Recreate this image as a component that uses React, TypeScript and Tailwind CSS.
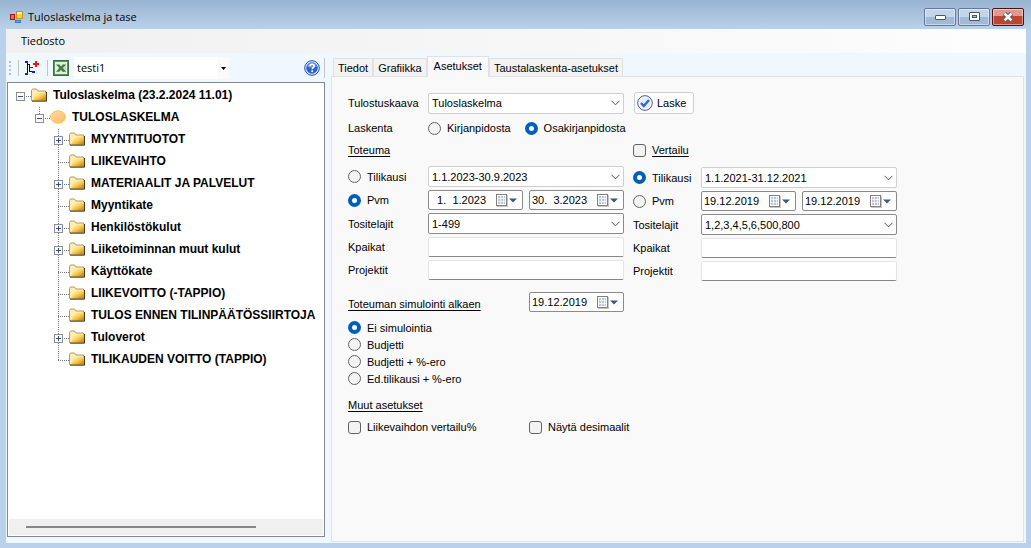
import React, { useState } from 'react';
import clsx from 'clsx';

type NodeIcon = 'folder' | 'group';

interface TreeNode {
  label: string;
  icon: NodeIcon;
  state?: 'open' | 'closed';
  children?: TreeNode[];
}

const tree: TreeNode = {
  label: 'Tuloslaskelma (23.2.2024 11.01)',
  icon: 'folder',
  state: 'open',
  children: [
    {
      label: 'TULOSLASKELMA',
      icon: 'group',
      state: 'open',
      children: [
        { label: 'MYYNTITUOTOT', icon: 'folder', state: 'closed' },
        { label: 'LIIKEVAIHTO', icon: 'folder' },
        { label: 'MATERIAALIT JA PALVELUT', icon: 'folder', state: 'closed' },
        { label: 'Myyntikate', icon: 'folder' },
        { label: 'Henkilöstökulut', icon: 'folder', state: 'closed' },
        { label: 'Liiketoiminnan muut kulut', icon: 'folder', state: 'closed' },
        { label: 'Käyttökate', icon: 'folder' },
        { label: 'LIIKEVOITTO (-TAPPIO)', icon: 'folder' },
        { label: 'TULOS ENNEN TILINPÄÄTÖSSIIRTOJA', icon: 'folder' },
        { label: 'Tuloverot', icon: 'folder', state: 'closed' },
        { label: 'TILIKAUDEN VOITTO (TAPPIO)', icon: 'folder' },
      ],
    },
  ],
};

const tabs = ['Tiedot', 'Grafiikka', 'Asetukset', 'Taustalaskenta-asetukset'];
const simulations = ['Ei simulointia', 'Budjetti', 'Budjetti + %-ero', 'Ed.tilikausi + %-ero'];

const AppIcon = () => (
  <svg width="14" height="14" viewBox="0 0 14 14" shapeRendering="crispEdges" aria-hidden="true">
    <rect x="0.500" y="4.500" width="4" height="5" fill="#e8685c" stroke="#a01810" />
    <rect x="6.500" y="1.500" width="6" height="7" fill="#ffcf3a" stroke="#c8921a" />
    <path d="M7 2h5v2H7z" fill="#fff0a8" />
    <rect x="5.500" y="10.500" width="5" height="2" fill="#6aa4f2" stroke="#3a74d8" />
  </svg>
);

const HierarchyIcon = () => (
  <svg width="16" height="16" viewBox="0 0 16 16" shapeRendering="crispEdges" aria-hidden="true">
    <path d="M3.500 2v12M3 4.500h3M5.500 4v8M5 7.500h3M5 11.500h5" stroke="#111" fill="none" />
    <path d="M1 1h3v2H1zM1 13h3v2H1zM6 7h3v1H6zM8 11h3v2H8z" fill="#1414ff" />
    <path d="M11 1h2v2h2v2h-2v2h-2V5H9V3h2z" fill="#f01414" />
  </svg>
);

const ExcelIcon = () => (
  <svg width="16" height="16" viewBox="0 0 16 16" aria-hidden="true">
    <rect x="0.500" y="0.500" width="15" height="15" fill="#5f945c" stroke="#3b6e3b" />
    <rect x="2" y="2" width="12" height="12" fill="#e4eee0" />
    <path d="M9 5h4M9 7h4M9 9h4M9 11h4" stroke="#a9c6a5" />
    <path d="M3 4.500h3.500l1.500 2L10 4.500h3L9.800 8l3.200 3.700H9.500L8 9.800l-1.700 1.900H3L6.300 8z" fill="#3d7f3d" />
  </svg>
);

const HelpIcon = () => (
  <svg width="16" height="16" viewBox="0 0 16 16" aria-hidden="true">
    <circle cx="8" cy="8" r="7.300" fill="#e8eefa" stroke="#23479c" strokeWidth="1" />
    <circle cx="8" cy="8" r="5.800" fill="#2c62cf" />
    <path d="M3.200 6.500a5 5 0 0 1 9.600 0c-3 1.500-6.500 1.500-9.600 0z" fill="#6f9cf0" />
    <path d="M6 6.300c0-1.300.9-2 2.100-2s2.100.7 2.100 1.800c0 1.500-2 1.600-2 3.100" stroke="#fff" strokeWidth="1.500" fill="none" />
    <circle cx="8.200" cy="11.200" r="1" fill="#fff" />
  </svg>
);

// Closed manila folder, darker towards the lower right corner
const FolderIcon = () => (
  <svg width="16" height="14" viewBox="0 0 16 14" aria-hidden="true">
    <defs>
      <linearGradient id="folderFill" x1="0" y1="0" x2="1" y2="1">
        <stop offset="0.150" stopColor="#fdf3b8" />
        <stop offset="0.500" stopColor="#fbcf55" />
        <stop offset="1" stopColor="#b87410" />
      </linearGradient>
    </defs>
    <path d="M0.500 12.500v-10l1-1.500h4l1.500 2h7.500v9.500z" fill="#fbeeb0" stroke="#b09a64" />
    <path d="M1.500 12.500l2-3 1-5h11v8z" fill="url(#folderFill)" />
    <path d="M1 13.200h14.500V4" fill="none" stroke="#4b3a16" />
  </svg>
);

const GroupIcon = () => (
  <svg width="16" height="14" viewBox="0 0 16 14" aria-hidden="true">
    <defs>
      <linearGradient id="groupFill" x1="0" y1="0" x2="1" y2="1">
        <stop offset="0" stopColor="#ffd9a0" />
        <stop offset="0.500" stopColor="#ffc98a" />
        <stop offset="1" stopColor="#ffc23c" />
      </linearGradient>
    </defs>
    <ellipse cx="8" cy="7" rx="7.400" ry="6.200" fill="url(#groupFill)" stroke="#ffc04a" />
  </svg>
);

const CheckIcon = () => (
  <svg width="16" height="16" viewBox="0 0 16 16" aria-hidden="true">
    <circle cx="8" cy="8" r="7.300" fill="#d5e2f6" stroke="#4a5878" />
    <circle cx="8" cy="8" r="6.100" fill="#e6eefb" stroke="#fff" strokeWidth="0.800" />
    <path d="M4 8l2.800 3L12 5" stroke="#2f66dc" strokeWidth="2.400" fill="none" />
  </svg>
);

const Chevron = () => (
  <svg
    className="pointer-events-none absolute right-1 top-1/2 -translate-y-1/2"
    width="9"
    height="6"
    viewBox="0 0 9 6"
    aria-hidden="true"
  >
    <path d="M0.500 0.800l4 4 4-4" stroke="#555" fill="none" />
  </svg>
);

// Connector lines and the +/- box in front of a tree node
const Gutter = ({ node, root, last }: { node: TreeNode; root: boolean; last: boolean }) => (
  <svg className="shrink-0" width="15" height="22" viewBox="0 0 15 22" shapeRendering="crispEdges" aria-hidden="true">
    {!root && <path d={last ? 'M4.500 0V11' : 'M4.500 0V22'} stroke="#777" strokeDasharray="1 1" />}
    <path d="M4 11.500h11" stroke="#777" strokeDasharray="1 1" />
    {node.state && (
      <>
        <rect x="0.500" y="7.500" width="8" height="8" fill="#fafafa" stroke="#8e8f8f" />
        <path d="M2 11.500h5" stroke="#2f4fa0" />
        {node.state === 'closed' && <path d="M4.500 9v5" stroke="#2f4fa0" />}
      </>
    )}
  </svg>
);

const TreeItem = ({ node, root = false, last = true }: { node: TreeNode; root?: boolean; last?: boolean }) => (
  <li role="treeitem" aria-expanded={node.state ? node.state === 'open' : undefined}>
    <div className="flex h-[22px] items-center whitespace-nowrap">
      <Gutter node={node} root={root} last={last} />
      <div className="flex items-center gap-1.5 pb-0.5">
        {node.icon === 'folder' ? <FolderIcon /> : <GroupIcon />}
        {node.label}
      </div>
    </div>
    {node.children && (
      <ul role="group" className="pl-[19px]">
        {node.children.map((child, i) => (
          <TreeItem key={child.label} node={child} last={i === node.children!.length - 1} />
        ))}
      </ul>
    )}
  </li>
);

interface SelectProps {
  id: string;
  value: string;
  label?: string;
  strong?: boolean;
}

const Select = ({ id, value, label, strong }: SelectProps) => (
  <div className="relative w-[196px]">
    <select
      id={id}
      aria-label={label}
      className={clsx(
        'block h-[21px] w-full appearance-none rounded-[2px] border bg-white pl-[3px] pr-4',
        strong ? 'border-[#8a8a8a]' : 'border-[#cfcfcf]'
      )}
    >
      <option>{value}</option>
    </select>
    <Chevron />
  </div>
);

const DateBox = ({ label, value }: { label: string; value: string }) => (
  <div className="flex h-5 w-[95px] items-center rounded-[2px] border border-[#8a8a8a] bg-white pl-0.5 pr-[5px]">
    <input aria-label={label} defaultValue={value} className="h-full w-full min-w-0 flex-1 bg-transparent outline-none" />
    <button type="button" aria-label="Avaa kalenteri" className="shrink-0">
      <svg width="21" height="13" viewBox="0 0 21 13" aria-hidden="true">
        <rect x="1" y="1" width="11" height="12" fill="#c9c5c2" />
        <rect x="0.500" y="0.500" width="10" height="11" fill="#fff" stroke="#85807e" />
        <path d="M2 2h7v8H2z" fill="#b9c6dc" />
        <path d="M2 4.500h7M2 7.500h7M4.500 2v8M7.500 2v8" stroke="#fff" strokeWidth="0.700" />
        <path d="M13 4.500h8l-4 4z" fill="#40587c" />
      </svg>
    </button>
  </div>
);

const TextBox = ({ id }: { id: string }) => (
  <input
    id={id}
    className="h-5 w-[196px] rounded-[2px] border border-[#e4e4e4] border-b-[#868686] bg-white px-1 outline-none"
  />
);

interface ChoiceProps {
  name: string;
  label: string;
  checked: boolean;
  onChange: () => void;
}

const Radio = ({ name, label, checked, onChange }: ChoiceProps) => (
  <label className="flex items-center gap-1.5">
    <input
      type="radio"
      name={name}
      checked={checked}
      onChange={onChange}
      className="size-[13px] shrink-0 appearance-none rounded-full border border-[#626262] bg-[#f3f3f3] checked:border-4 checked:border-[#005fb8] checked:bg-white"
    />
    {label}
  </label>
);

const Checkbox = ({ label, underline }: { label: string; underline?: boolean }) => (
  <label className="flex items-center gap-1.5">
    <input
      type="checkbox"
      className="size-[13px] shrink-0 appearance-none rounded-[3px] border border-[#626262] bg-[#f3f3f3] checked:bg-[#005fb8]"
    />
    <span className={clsx(underline && 'underline underline-offset-2')}>{label}</span>
  </label>
);

interface PeriodProps {
  name: string;
  initial: string;
  period: string;
  from: string;
  to: string;
  receipts: string;
  labelClass: string;
}

const PeriodFields = ({ name, initial, period, from, to, receipts, labelClass }: PeriodProps) => {
  const [mode, setMode] = useState(initial);

  return (
    <div className="flex flex-col gap-[3px]">
      <div className="flex items-center">
        <div className={labelClass}>
          <Radio name={name} label="Tilikausi" checked={mode === 'tilikausi'} onChange={() => setMode('tilikausi')} />
        </div>
        <Select id={`${name}-tilikausi`} label="Tilikausi" value={period} />
      </div>
      <div className="flex items-center">
        <div className={labelClass}>
          <Radio name={name} label="Pvm" checked={mode === 'pvm'} onChange={() => setMode('pvm')} />
        </div>
        <div className="flex gap-1.5">
          <DateBox label="Alkaen" value={from} />
          <DateBox label="Asti" value={to} />
        </div>
      </div>
      <div className="flex items-center">
        <label htmlFor={`${name}-lajit`} className={labelClass}>Tositelajit</label>
        <Select id={`${name}-lajit`} value={receipts} strong />
      </div>
      <div className="flex items-center">
        <label htmlFor={`${name}-kpaikat`} className={labelClass}>Kpaikat</label>
        <TextBox id={`${name}-kpaikat`} />
      </div>
      <div className="flex items-center">
        <label htmlFor={`${name}-projektit`} className={labelClass}>Projektit</label>
        <TextBox id={`${name}-projektit`} />
      </div>
    </div>
  );
};

const Settings = () => {
  const [source, setSource] = useState('osa');
  const [simulation, setSimulation] = useState(simulations[0]);

  return (
    <form className="px-4 pt-[15px]" onSubmit={(e) => e.preventDefault()}>
      <div className="flex items-center">
        <label htmlFor="kaava" className="w-20">Tulostuskaava</label>
        <Select id="kaava" value="Tuloslaskelma" />
        <button
          type="submit"
          className="ml-2.5 flex h-[22px] w-[60px] items-center gap-1 rounded-[3px] border border-[#cfcfcf] bg-[#fdfdfd] pl-0.5"
        >
          <CheckIcon />
          Laske
        </button>
      </div>

      <div className="mt-1.5 flex h-4 items-center">
        <span className="w-20">Laskenta</span>
        <div className="flex gap-3.5">
          <Radio name="laskenta" label="Kirjanpidosta" checked={source === 'kirja'} onChange={() => setSource('kirja')} />
          <Radio name="laskenta" label="Osakirjanpidosta" checked={source === 'osa'} onChange={() => setSource('osa')} />
        </div>
      </div>

      <div className="mt-1.5 flex gap-[9px]">
        <section>
          <h2 className="mb-2 h-4 underline underline-offset-2">Toteuma</h2>
          <PeriodFields
            name="toteuma"
            initial="pvm"
            period="1.1.2023-30.9.2023"
            from="  1.  1.2023"
            to="30.  3.2023"
            receipts="1-499"
            labelClass="w-20"
          />
        </section>
        <section>
          <div className="mb-[9px] flex h-4 items-center">
            <Checkbox label="Vertailu" underline />
          </div>
          <PeriodFields
            name="vertailu"
            initial="tilikausi"
            period="1.1.2021-31.12.2021"
            from="19.12.2019"
            to="19.12.2019"
            receipts="1,2,3,4,5,6,500,800"
            labelClass="w-[68px]"
          />
        </section>
      </div>

      <div className="mt-[11px] flex items-end">
        <h2 className="w-[181px] underline underline-offset-2">Toteuman simulointi alkaen</h2>
        <DateBox label="Simulointi alkaen" value="19.12.2019" />
      </div>
      <div className="mt-[7px]">
        {simulations.map((item) => (
          <div key={item} className="flex h-[17px] items-center">
            <Radio name="simulointi" label={item} checked={simulation === item} onChange={() => setSimulation(item)} />
          </div>
        ))}
      </div>

      <h2 className="mt-2.5 h-4 underline underline-offset-2">Muut asetukset</h2>
      <div className="mt-1.5 flex h-4 items-center">
        <div className="w-[181px]">
          <Checkbox label="Liikevaihdon vertailu%" />
        </div>
        <Checkbox label="Näytä desimaalit" />
      </div>
    </form>
  );
};

const captionButton =
  'flex h-[18px] w-8 items-center justify-center rounded-[2px] border shadow-[inset_0_0_0_1px_rgba(255,255,255,0.45)]';
const captionBlue = 'border-[#63789a] bg-linear-to-b from-[#c3d5e9] from-50% to-[#9fb9d6] to-50%';

const App = () => {
  const [activeTab, setActiveTab] = useState('Asetukset');

  return (
    <div className="flex min-h-screen flex-col bg-[#b9d1ea] pb-[5px] pl-1.5 pr-[5px] font-['Liberation_Sans',Arial,sans-serif] text-[11px] leading-4 text-black">
      <header className="-ml-1.5 -mr-[5px] flex h-[29px] items-center justify-between bg-linear-to-b from-[#99b4d1] to-[#b9d1ea] pl-2.5 pr-[7px] pt-1">
        <div className="flex items-center gap-1 font-['Open_Sans','Noto_Sans',sans-serif]">
          <AppIcon />
          <h1>Tuloslaskelma ja tase</h1>
        </div>
        <div className="flex gap-0.5">
          <button type="button" aria-label="Pienennä" className={clsx(captionButton, captionBlue)}>
            <svg className="mt-0.5" width="11" height="5" viewBox="0 0 11 5" aria-hidden="true">
              <rect x="0.500" y="0.500" width="10" height="4" rx="0.500" fill="#fff" stroke="#4c5568" />
            </svg>
          </button>
          <button type="button" aria-label="Suurenna" className={clsx(captionButton, captionBlue)}>
            <svg width="11" height="9" viewBox="0 0 11 9" aria-hidden="true">
              <rect x="0.500" y="0.500" width="10" height="8" rx="0.500" fill="#fff" stroke="#4c5568" />
              <rect x="3.500" y="3.500" width="4" height="2" fill="#a9c4e2" stroke="#4c5568" />
            </svg>
          </button>
          <button
            type="button"
            aria-label="Sulje"
            className={clsx(captionButton, 'border-[#4d1218] bg-linear-to-b from-[#e0998c] from-45% to-[#bc4630] to-45%')}
          >
            <svg width="12" height="10" viewBox="0 0 12 10" aria-hidden="true">
              <path d="M2.500 1.500l7 7M9.500 1.500l-7 7" stroke="#4c4f60" strokeWidth="4.500" />
              <path d="M2.500 1.500l7 7M9.500 1.500l-7 7" stroke="#fff" strokeWidth="2.600" />
            </svg>
          </button>
        </div>
      </header>

      <nav className="flex h-6 items-center bg-linear-to-r from-[#f0f0f0] to-[#fdfdfd] pl-[15px] font-['Open_Sans','Noto_Sans',sans-serif]">
        <button type="button">Tiedosto</button>
      </nav>

      <main className="flex flex-1 gap-1.5 bg-[#eff7ff] pl-px pr-0.5">
        <aside className="flex w-[318px] shrink-0 flex-col pb-1.5 pt-1">
          <div className="flex h-[22px] items-center pl-0.5">
            <div className="h-[14px] border-l-2 border-dotted border-[#c0c0c0]" />
            <div className="ml-[7px] h-4 w-px bg-[#c4c4c4]" />
            <button type="button" aria-label="Puunäkymä" className="ml-[5px]">
              <HierarchyIcon />
            </button>
            <div className="ml-[7px] h-4 w-px bg-[#c4c4c4]" />
            <button type="button" aria-label="Vie Exceliin" className="ml-[5px]">
              <ExcelIcon />
            </button>
            <div className="relative ml-[5px] w-[155px]">
              <select
                aria-label="Raportti"
                className="block h-[22px] w-full appearance-none bg-white pl-[3px] font-['Open_Sans','Noto_Sans',sans-serif]"
              >
                <option>testi1</option>
              </select>
              <div className="pointer-events-none absolute inset-y-0 right-0 flex w-3 items-center justify-center bg-[#fafafa]">
                <svg width="5" height="3" viewBox="0 0 5 3" aria-hidden="true">
                  <path d="M0 0h5L2.500 3z" fill="#000" />
                </svg>
              </div>
            </div>
            <button type="button" aria-label="Ohje" className="ml-auto mr-1">
              <HelpIcon />
            </button>
            <div className="h-5 w-px bg-[#c4c4c4]" />
          </div>

          <div className="mt-[3px] flex flex-1 flex-col border border-[#828790] bg-white p-px">
            <ul role="tree" className="flex-1 overflow-hidden pl-[7px] pt-px text-[12px] font-bold">
              <TreeItem node={tree} root />
            </ul>
            <div className="h-4 bg-[#f0f0f0] px-[17px] pt-[7px]">
              <div className="h-0.5 w-[82%] bg-[#868686]" />
            </div>
          </div>
        </aside>

        <section className="flex flex-1 flex-col pb-px pt-[3px]">
          <div role="tablist" className="flex h-5 items-end pl-0.5">
            {tabs.map((tab) => (
              <button
                key={tab}
                type="button"
                role="tab"
                aria-selected={tab === activeTab}
                onClick={() => setActiveTab(tab)}
                className={clsx(
                  'border border-b-0 border-[#e1e1e1] whitespace-nowrap',
                  tab === activeTab ? 'relative -mb-px h-[21px] bg-[#f9f9f9] px-1.5 pb-0.5' : 'h-[18px] bg-[#f3f3f3] px-1'
                )}
              >
                {tab}
              </button>
            ))}
          </div>
          <div role="tabpanel" className="flex-1 border border-[#e1e1e1] bg-[#f9f9f9]">
            <Settings />
          </div>
        </section>
      </main>
    </div>
  );
};

export default App;
